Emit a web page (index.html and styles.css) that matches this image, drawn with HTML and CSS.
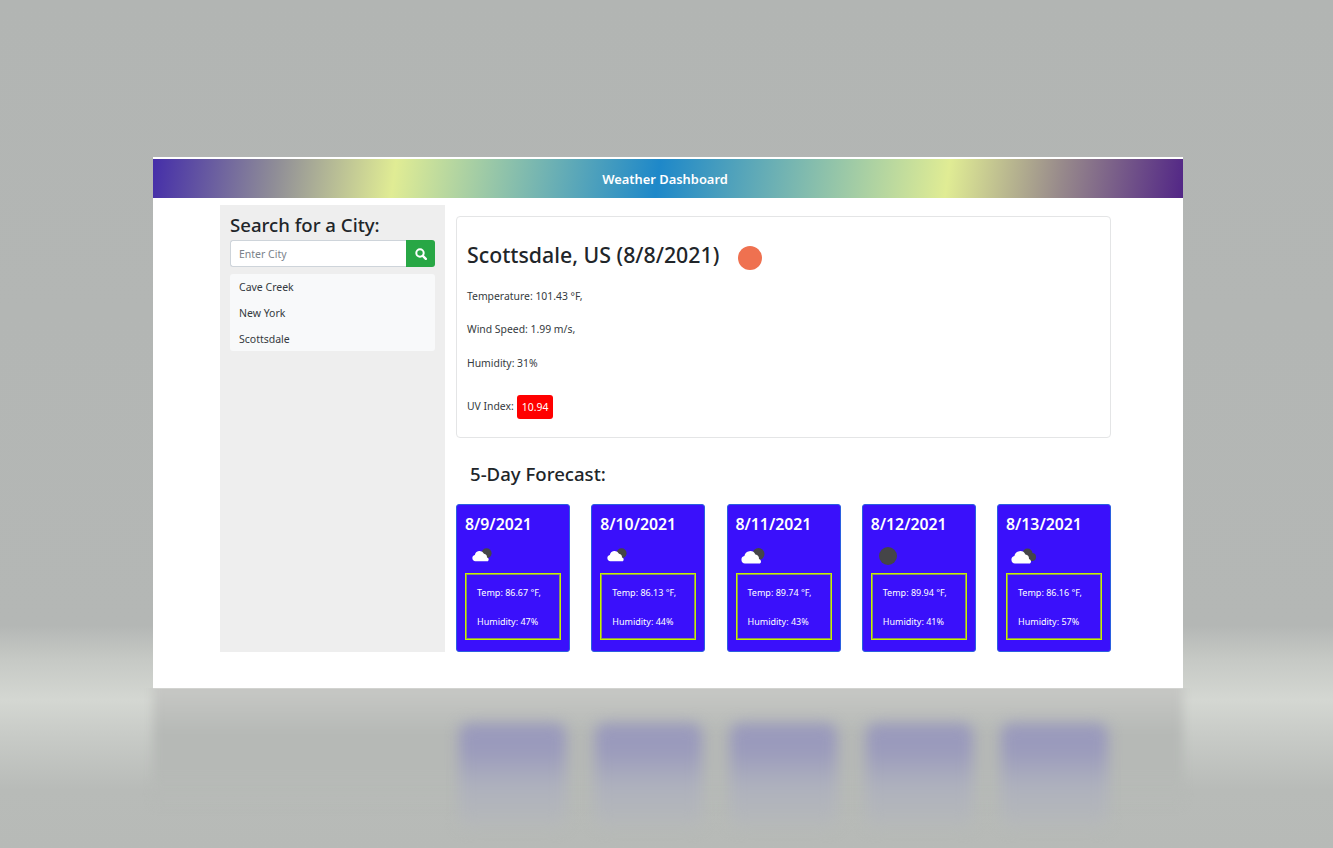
FILE: index.html
```html
<!DOCTYPE html>
<html lang="en">
<head>
<meta charset="utf-8">
<title>Weather Dashboard</title>
<link rel="stylesheet" href="styles.css">
</head>
<body>
<svg class="defs" width="0" height="0" aria-hidden="true">
  <symbol id="cloud" viewBox="0 0 24 16">
    <circle cx="17.500" cy="6" r="6" fill="#454548"/>
    <path d="M4 15.500a3.800 3.800 0 0 1-.6-7.500 5.800 5.800 0 0 1 11-1.500 4.300 4.300 0 0 1 3.600 4.400 2.600 2.600 0 0 1 1 4.600z" fill="#fff"/>
  </symbol>
  <symbol id="clouds" viewBox="0 0 26 16">
    <circle cx="16.500" cy="5.500" r="5" fill="#454548"/>
    <circle cx="21" cy="9" r="4" fill="#454548"/>
    <path d="M4 15.500a3.800 3.800 0 0 1-.6-7.500 5.800 5.800 0 0 1 11-1.500 4.300 4.300 0 0 1 3.600 4.400 2.600 2.600 0 0 1 1 4.600z" fill="#fff"/>
  </symbol>
</svg>
<div class="window">
  <header class="topbar">Weather Dashboard</header>
  <div class="content">
    <aside class="sidebar">
      <h2 class="search-title">Search for a City:</h2>
      <div class="search-group">
        <input class="search-input" type="text" placeholder="Enter City">
        <button class="search-btn" type="button" aria-label="Search">
          <svg width="12" height="12" viewBox="0 0 12 12"><circle cx="5" cy="5" r="3.700" fill="none" stroke="#fff" stroke-width="2"/><path d="M7.800 7.800l3 3" stroke="#fff" stroke-width="2.400" stroke-linecap="round"/></svg>
        </button>
      </div>
      <ul class="history">
        <li>Cave Creek</li>
        <li>New York</li>
        <li>Scottsdale</li>
      </ul>
    </aside>
    <main class="main">
      <section class="current">
        <div class="current-head">
          <h1 class="city">Scottsdale, US (8/8/2021)</h1>
          <span class="sun"></span>
        </div>
        <p class="stat">Temperature: 101.43 °F,</p>
        <p class="stat">Wind Speed: 1.99 m/s,</p>
        <p class="stat">Humidity: 31%</p>
        <p class="stat uv">UV Index: <span class="uv-badge">10.94</span></p>
      </section>
      <h2 class="forecast-title">5-Day Forecast:</h2>
      <div class="forecast">
        <article class="day">
          <h3 class="date">8/9/2021</h3>
          <div class="icon-row"><svg class="ico ico-sm"><use href="#cloud"/></svg></div>
          <div class="details"><p>Temp: 86.67 °F,</p><p>Humidity: 47%</p></div>
        </article>
        <article class="day">
          <h3 class="date">8/10/2021</h3>
          <div class="icon-row"><svg class="ico ico-sm"><use href="#cloud"/></svg></div>
          <div class="details"><p>Temp: 86.13 °F,</p><p>Humidity: 44%</p></div>
        </article>
        <article class="day">
          <h3 class="date">8/11/2021</h3>
          <div class="icon-row"><svg class="ico ico-md"><use href="#cloud"/></svg></div>
          <div class="details"><p>Temp: 89.74 °F,</p><p>Humidity: 43%</p></div>
        </article>
        <article class="day">
          <h3 class="date">8/12/2021</h3>
          <div class="icon-row"><span class="dark-sun"></span></div>
          <div class="details"><p>Temp: 89.94 °F,</p><p>Humidity: 41%</p></div>
        </article>
        <article class="day">
          <h3 class="date">8/13/2021</h3>
          <div class="icon-row"><svg class="ico ico-lg"><use href="#clouds"/></svg></div>
          <div class="details"><p>Temp: 86.16 °F,</p><p>Humidity: 57%</p></div>
        </article>
      </div>
    </main>
  </div>
</div>
<div class="reflection">
  <div class="ghosts">
    <span class="ghost"></span><span class="ghost"></span><span class="ghost"></span><span class="ghost"></span><span class="ghost"></span>
  </div>
</div>
</body>
</html>
```
FILE: styles.css
```css
* { box-sizing: border-box; }
html, body { margin: 0; height: 848px; overflow: hidden; }
body {
  padding-top: 157px;
  font-family: "Noto Sans", "Open Sans", sans-serif;
  color: #212529;
  background: linear-gradient(180deg, #b2b5b3 0, #b4b7b5 625px, #c6c9c5 660px, #d4d7d2 700px, #c8cbc7 735px, #b8bbb8 790px, #b7bab7 848px);
}
.defs { position: absolute; }
.window {
  position: relative;
  z-index: 1;
  width: 1030px;
  height: 531px;
  margin-left: 153px;
  padding-top: 2px;
  background: #fff;
  box-shadow: 0 1px 0 #d2d3d0;
}
.topbar {
  height: 39px;
  padding-right: 6px;
  display: flex;
  align-items: center;
  justify-content: center;
  color: #fff;
  font-size: 12.900px;
  font-weight: 600;
  background: linear-gradient(98deg, #452ea9 0, #8f8d97 12%, #e0ec94 23.500%, #1e88c9 49%, #e0ec94 77%, #97898b 88%, #522686 100%);
}
.content {
  display: flex;
  gap: 11px;
  padding: 7px 72px 0 67px;
}
.sidebar {
  width: 225px;
  height: 447px;
  padding: 8px 10px;
  background: #eee;
}
.search-title {
  margin: 0 0 3px;
  font-size: 18.600px;
  line-height: 24px;
  font-weight: 500;
}
.search-group { display: flex; height: 27px; }
.search-input {
  flex: 1;
  min-width: 0;
  padding: 1px 8px 0;
  border: 1px solid #ced4da;
  border-right: 0;
  border-radius: 3px 0 0 3px;
  font: 10.500px "Noto Sans", sans-serif;
  background: #fff;
}
.search-input::placeholder { color: #7a828a; opacity: 1; }
.search-btn {
  width: 29px;
  padding: 0;
  border: 0;
  border-radius: 0 3px 3px 0;
  background: #28a745;
  display: flex;
  align-items: center;
  justify-content: center;
}
.history {
  list-style: none;
  margin: 7px 0 0;
  padding: 0 9px;
  height: 77px;
  border-radius: 3px;
  background: #f8f9fa;
  color: #343a40;
  font-size: 10.500px;
}
.history li { height: 26px; line-height: 26px; }
.main { width: 655px; padding-top: 11px; }
.current {
  height: 222px;
  padding: 24px 10px 0;
  border: 1px solid #e4e5e6;
  border-radius: 4px;
}
.current-head { display: flex; align-items: center; height: 28px; margin-bottom: 20px; }
.city { margin: 0; font-size: 21.300px; line-height: 28px; font-weight: 500; }
.sun {
  width: 24px;
  height: 24px;
  margin: 5px 0 0 19px;
  border-radius: 50%;
  background: #ef7150;
}
.stat { margin: 0 0 18.400px; font-size: 10.400px; line-height: 15px; color: #343a40; }
.uv { display: flex; align-items: center; gap: 3px; height: 24px; margin: 24px 0 0; }
.uv-badge {
  padding: 0 5px;
  height: 24px;
  line-height: 24px;
  border-radius: 3px;
  background: #f00;
  color: #fff;
}
.forecast-title {
  margin: 24px 0 18px 14px;
  font-size: 18.600px;
  line-height: 24px;
  font-weight: 500;
}
.forecast { display: flex; justify-content: space-between; }
.day {
  width: 114px;
  height: 148px;
  padding: 8px;
  border: 1px solid #2a5fe0;
  border-radius: 3px;
  background: #3a10fb;
  color: #fff;
}
.date { margin: 0; font-size: 15.800px; line-height: 22px; font-weight: 600; }
.icon-row { height: 38px; display: flex; align-items: center; padding-left: 7px; }
.ico { display: block; }
.ico-sm { width: 20px; height: 16px; margin-top: 1px; }
.ico-md { width: 24px; height: 16px; margin-left: -2px; margin-top: 4px; }
.ico-lg { width: 26px; height: 16px; margin-left: -2px; margin-top: 4px; }
.dark-sun {
  width: 18px;
  height: 18px;
  margin: 4px 0 0 1px;
  border-radius: 50%;
  background: #454548;
}
.details {
  height: 67px;
  padding: 12px 12px 0;
  box-shadow: inset 0 0 0 1px #c6f000, inset 0 0 0 2px rgba(198, 240, 0, .6);
  font-size: 9px;
  line-height: 15px;
}
.details p { margin: 0 0 14px; }
.reflection {
  position: relative;
  height: 160px;
  margin: 0 150px 0 153px;
  padding: 35px 75px 0 306px;
  clip-path: inset(0 -30px 0 -30px);
}
.reflection::before {
  content: "";
  position: absolute;
  inset: -10px 0 40px 0;
  background: linear-gradient(180deg, #c6c7c4 0, #c6c7c4 12px, #b6b9b6 55px, #b6b9b6 100px, rgba(182, 185, 182, 0) 100%);
  filter: blur(5px);
}
.ghosts {
  position: relative;
  display: flex;
  justify-content: space-between;
  filter: blur(7px);
}
.ghost {
  width: 107px;
  height: 105px;
  border-radius: 10px;
  background: linear-gradient(180deg, #9a9abc 0, #9a9abc 25%, #aeb1bd 60%, #b6b9b9 100%);
}
```
